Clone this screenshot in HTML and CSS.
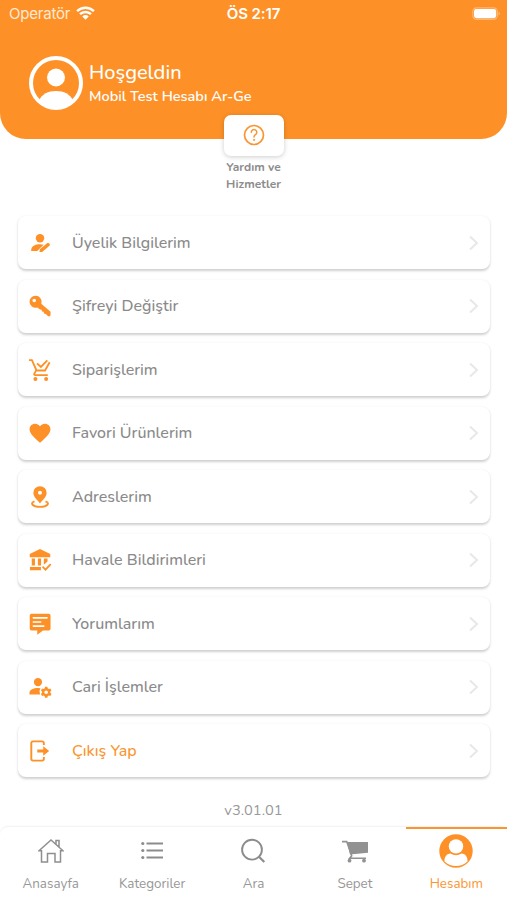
FILE: index.html
```html
<!DOCTYPE html>
<html lang="tr">
<head>
<meta charset="utf-8">
<title>Hesabım</title>
<link rel="stylesheet" href="styles.css">
</head>
<body>
<div class="app">
  <header class="header">
    <div class="status">
      <div class="carrier"><span>Operatör</span>
        <svg width="19" height="14" viewBox="0 0 19 14" fill="none" stroke="#fff" stroke-width="2.5"><path d="M1.100 5.100a12 12 0 0 1 16.800 0M4 8.200a7.800 7.800 0 0 1 11 0"/><path d="M6.300 10.400a4.500 4.500 0 0 1 6.400 0L9.500 13.700z" fill="#fff" stroke="none"/></svg>
      </div>
      <div class="clock">ÖS 2:17</div>
      <svg class="battery" width="29" height="14" viewBox="0 0 29 14"><rect x=".8" y=".8" width="24.600" height="11.600" rx="3.800" fill="none" stroke="#ffb670" stroke-width="1.200"/><rect x="2" y="2" width="22.200" height="9.200" rx="2.400" fill="#fff"/><path d="M26.500 4.500q3 2.100 0 4.200z" fill="#ffb670"/></svg>
    </div>
    <div class="profile">
      <svg width="54" height="54" viewBox="0 0 54 54"><circle cx="27" cy="27" r="25" fill="none" stroke="#fff" stroke-width="4"/><circle cx="27" cy="21.500" r="9" fill="#fff"/><path d="M10 44.500C13 38 19 35 27 35s14 3 17 9.500Q37 52 27 52T10 44.500Z" fill="#fff"/></svg>
      <div class="who">
        <div class="hello">Hoşgeldin</div>
        <div class="name">Mobil Test Hesabı Ar-Ge</div>
      </div>
    </div>
  </header>
  <section class="help">
    <div class="help-card">
      <svg width="22" height="22" viewBox="0 0 22 22" fill="none" stroke="#f99432" stroke-linecap="round"><circle cx="11" cy="11" r="9.500" stroke-width="1.700"/><path d="M8.300 8.300a2.750 2.750 0 1 1 4.200 2.300c-1 .7-1.500 1.200-1.500 2.300" stroke-width="1.500"/><circle cx="11" cy="15.900" r=".6" fill="#f99432" stroke-width=".8"/></svg>
    </div>
    <div class="help-label">Yardım ve<br>Hizmetler</div>
  </section>
  <main class="menu">
    <div class="row"><svg class="icon" viewBox="0 0 24 24"><circle cx="12" cy="6.900" r="4.600"/><path d="M2.400 20.800v-1.200c0-4.200 4.500-6.300 9.600-6.300 1.300 0 2.800.2 4 .6L9 20.800zM11.500 21.700l.3-2.800 8.200-6.800q1.500-.5 2.500.7.800 1.200-.2 2.200l-8 6.700z"/></svg><span>Üyelik Bilgilerim</span><svg class="chev" viewBox="0 0 10 16"><path d="M1 1.500 8 8l-7 6.500"/></svg></div>
    <div class="row"><svg class="icon" viewBox="0 0 24 24"><path fill-rule="evenodd" d="M7.200.9a6.500 6.500 0 1 0 1.800 12.700l3.100 2.200 1.700.2.300 1.900 2 .4.200 2 2 .3 2 2c1 1 3.200.7 3.200-.8v-3.500l-10.100-8.800A6.500 6.500 0 0 0 7.200.9ZM5.700 4a2 2 0 1 1 0 4 2 2 0 0 1 0-4Z"/></svg><span>Şifreyi Değiştir</span><svg class="chev" viewBox="0 0 10 16"><path d="M1 1.500 8 8l-7 6.500"/></svg></div>
    <div class="row"><svg class="icon" viewBox="0 0 24 24"><path d="M0 1.200h3.200l5 11.300h9.300l5-9M7.700 12.700l-2 3.500q-.3 1.300 1 1.300h13.800M8.700 4.700l4.300 4 7-7.200" fill="none" stroke="currentColor" stroke-width="2"/><circle cx="7" cy="21.700" r="2.200"/><circle cx="18.700" cy="21.700" r="2.200"/></svg><span>Siparişlerim</span><svg class="chev" viewBox="0 0 10 16"><path d="M1 1.500 8 8l-7 6.500"/></svg></div>
    <div class="row"><svg class="icon" viewBox="0 0 24 24"><path d="m12 22.700-1.600-1.500C4.500 15.800.6 12 .6 7.900c0-3.500 2.600-6.100 6.100-6.100 2.100 0 4 1 5.300 2.700 1.300-1.700 3.200-2.700 5.300-2.700 3.500 0 6.100 2.600 6.100 6.100 0 4.100-3.900 7.900-9.800 13.300z"/></svg><span>Favori Ürünlerim</span><svg class="chev" viewBox="0 0 10 16"><path d="M1 1.500 8 8l-7 6.500"/></svg></div>
    <div class="row"><svg class="icon" viewBox="0 0 24 24"><path fill-rule="evenodd" d="M12 .2a7.200 7.200 0 0 0-7.200 7.200c0 4.500 3.400 6.900 7.200 11.600 3.800-4.700 7.200-7.100 7.200-11.600A7.200 7.200 0 0 0 12 .2Zm0 5a2.200 2.200 0 1 1 0 4.400 2.200 2.200 0 0 1 0-4.400Z"/><path d="M6 16.700C.5 18.600 4 22.800 12 22.800s11.500-4.200 6-6.100" fill="none" stroke="currentColor" stroke-width="2.100"/></svg><span>Adreslerim</span><svg class="chev" viewBox="0 0 10 16"><path d="M1 1.500 8 8l-7 6.500"/></svg></div>
    <div class="row"><svg class="icon" viewBox="0 0 24 24"><path d="M12 .1.800 5.500v3.400h22.400V5.500zM3 10.400h3.500v7.700H3zM9.700 10.400h3.500v7.700H9.700zM16.200 10.400h4v3.200l-4 3.500zM1 19.600h12v3.700H1z"/><path d="m14.800 19.300 3.200 3.200 5.700-6" fill="none" stroke="currentColor" stroke-width="2"/></svg><span>Havale Bildirimleri</span><svg class="chev" viewBox="0 0 10 16"><path d="M1 1.500 8 8l-7 6.500"/></svg></div>
    <div class="row"><svg class="icon" viewBox="0 0 24 24"><path d="M2.800.7h18.700q2 0 2 2v14.500q0 2-2 2h-6.200L9 23.800v-4.600H2.800q-2 0-2-2V2.700q0-2 2-2Z"/><path d="M4.700 5.300h15M4.700 9.800h8M4.700 14.300h11.500" stroke="#fff" stroke-width="1.700" stroke-linecap="round"/></svg><span>Yorumlarım</span><svg class="chev" viewBox="0 0 10 16"><path d="M1 1.500 8 8l-7 6.500"/></svg></div>
    <div class="row"><svg class="icon" viewBox="0 0 24 24"><circle cx="9.800" cy="6.600" r="4.500"/><path d="M.5 20.200v-1.700c0-3.600 4.300-5.400 9.300-5.400l2.700.2a7 7 0 0 0-.4 6.900z"/><path fill-rule="evenodd" d="m17.500 11.800-.4 1.600-1.200.7-1.600-.5-1.300 2.200 1.200 1.200v1.400L13 19.600l1.300 2.200 1.600-.5 1.200.7.400 1.600H20l.4-1.600 1.200-.7 1.600.5 1.300-2.200-1.200-1.200V17l1.200-1.200-1.300-2.200-1.600.5-1.200-.7-.4-1.600zm1.250 3.900a2 2 0 1 1 0 4 2 2 0 0 1 0-4Z"/></svg><span>Cari İşlemler</span><svg class="chev" viewBox="0 0 10 16"><path d="M1 1.500 8 8l-7 6.500"/></svg></div>
    <div class="row exit"><svg class="icon" viewBox="0 0 24 24"><path d="M16.200 5.500v-2q0-2-2-2H4.500q-2 0-2 2v17q0 2 2 2h9.700q2 0 2-2v-2" fill="none" stroke="currentColor" stroke-width="2.100"/><path d="M9 10.300h6.500V6.700l6.500 5.300-6.500 5.300v-3.600H9z"/></svg><span>Çıkış Yap</span><svg class="chev" viewBox="0 0 10 16"><path d="M1 1.500 8 8l-7 6.500"/></svg></div>
  </main>
  <div class="version">v3.01.01</div>
  <nav class="tabs">
    <div class="tab"><div class="tab-icon"><svg width="26" height="26" viewBox="0 0 26 26" fill="none" stroke="#8f8f8f" stroke-width="1.500"><path d="M1 12.800 13 2l12 10.800h-2.500V24H17v-8.500H9.500V24h-6V12.800zM18 6.200V2.500h3v6.300"/></svg></div><span>Anasayfa</span></div>
    <div class="tab"><div class="tab-icon"><svg width="22" height="19" viewBox="0 0 22 19" fill="#8c8c8c"><circle cx="1.800" cy="2.500" r="1.600"/><circle cx="1.800" cy="9.500" r="1.600"/><circle cx="1.800" cy="16.500" r="1.600"/><path d="M5.500 1.600H22v1.800H5.500zM5.500 8.600H22v1.800H5.500zM5.500 15.600H22v1.800H5.500z"/></svg></div><span>Kategoriler</span></div>
    <div class="tab"><div class="tab-icon"><svg width="26" height="26" viewBox="0 0 26 26" fill="none" stroke="#8c8c8c" stroke-width="1.900"><circle cx="12" cy="11.700" r="9.900"/><path d="m18.700 18.500 5.600 5.500" stroke-width="2.200"/></svg></div><span>Ara</span></div>
    <div class="tab"><div class="tab-icon"><svg width="26" height="24" viewBox="0 0 26 24"><path d="M5 3h21v10.800L8 15.500z" fill="#929292"/><path d="M0 2.600h4.700l5 14.200-2 2.400H24" fill="none" stroke="#929292" stroke-width="1.600"/><circle cx="7.500" cy="21.700" r="1.900" fill="#929292"/><circle cx="22" cy="21.700" r="1.900" fill="#929292"/></svg></div><span>Sepet</span></div>
    <div class="tab active"><div class="tab-icon"><svg width="34" height="34" viewBox="0 0 34 34"><circle cx="17" cy="17" r="16.700" fill="#fd9127"/><circle cx="17" cy="12.400" r="7.200" fill="#fff"/><path d="M5.500 27.500c-.4-4.500 2.500-8 6-8q5.500 3.400 11 0c3.500 0 6.400 3.500 6 8q-5 4.500-11.500 4.500T5.500 27.500Z" fill="#fff"/></svg></div><span>Hesabım</span></div>
  </nav>
</div>
</body>
</html>
```

FILE: styles.css
```css
* { box-sizing: border-box; }
body { margin: 0; background: #fff; font-family: Nunito, Lato, sans-serif; color: #8a8a8a; }
.app { width: 507px; height: 900px; display: flex; flex-direction: column; overflow: hidden; }
.header { height: 139px; flex: none; background: #fd9127; border-radius: 0 0 26px 26px; color: #fff; }
.status { height: 27px; padding: 0 6px 0 9px; display: grid; grid-template-columns: 1fr auto 1fr; align-items: center; font: 15px/27px Inter, sans-serif; }
.carrier { display: flex; align-items: center; gap: 6px; color: #ffe9d4; letter-spacing: -.2px; }
.carrier svg { margin-bottom: 2px; }
.clock { font-weight: 600; letter-spacing: -.1px; margin-right: 3px; }
.battery { justify-self: end; }
.profile { display: flex; gap: 6px; padding: 29px 0 0 29px; }
.who { padding-top: 5px; }
.hello { font-size: 20px; line-height: 24px; font-weight: 500; }
.name { font-size: 14.500px; line-height: 23px; font-weight: 600; }
.help { height: 77px; flex: none; display: flex; flex-direction: column; align-items: center; margin-top: -24px; }
.help-card { width: 60px; height: 41px; flex: none; display: grid; place-items: center; padding-bottom: 2px; background: #fff; border-radius: 7px; box-shadow: 0 1px 5px #0003; }
.help-label { margin-top: 3px; text-align: center; font-size: 12px; line-height: 16.500px; font-weight: 700; color: #8c8c8c; }
.menu { margin: 24px 17px 0 18px; display: flex; flex-direction: column; gap: 10.500px; }
.row { height: 53px; flex: none; display: flex; align-items: center; padding: 0 11px; border-radius: 8px; box-shadow: 0 1.500px 2.500px #00000030; background: #fff; font-size: 16px; font-weight: 500; }
.icon { width: 22px; height: 22px; margin-right: 21px; fill: currentColor; color: #fd9127; overflow: visible; }
.row span { flex: 1; }
.chev { width: 10px; height: 16px; fill: none; stroke: #e8e8e8; stroke-width: 2; }
.exit { color: #fa962f; }
.version { margin-top: 23px; text-align: center; font-size: 14.700px; line-height: 20px; color: #999; }
.tabs { margin-top: auto; height: 73px; flex: none; display: grid; grid-template-columns: repeat(5, 1fr); border-radius: 8px 8px 0 0; box-shadow: 0 -1px 2px #0000000f; }
.tab { display: flex; flex-direction: column; align-items: center; border-top: 2px solid transparent; font-size: 13.400px; line-height: 18px; color: #979797; }
.tab-icon { height: 43px; display: grid; place-items: center; margin-bottom: 3px; }
.active { color: #fa962f; border-color: #fa962f; }
```
